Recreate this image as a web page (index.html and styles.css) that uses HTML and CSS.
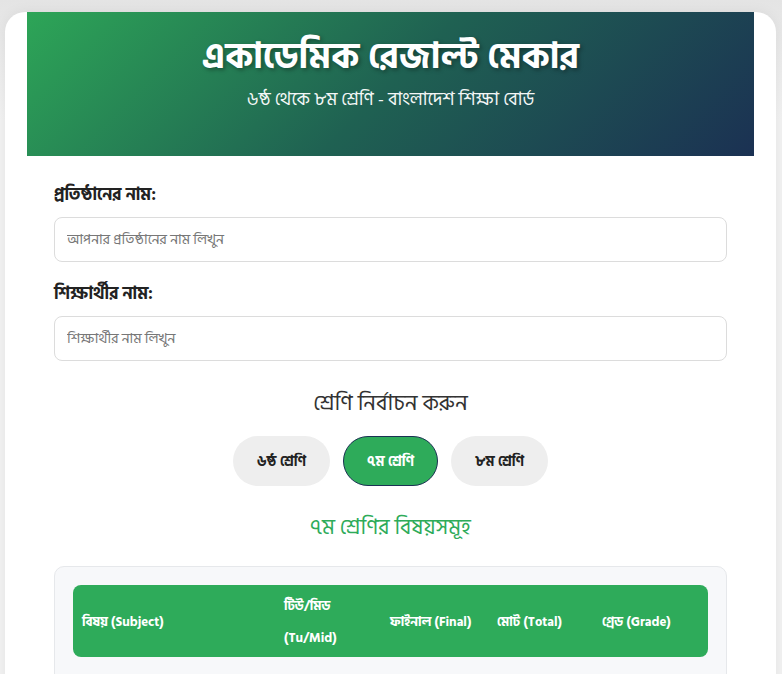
FILE: index.html
```html
<!DOCTYPE html>
<html lang="bn">
<head>
    <meta charset="UTF-8">
    <meta name="viewport" content="width=device-width, initial-scale=1.0">
    <title>একাডেমিক রেজাল্ট মেকার</title>
    <link rel="stylesheet" href="styles.css">
</head>
<body>
    <div class="card">
        <div class="header">
            <h1>একাডেমিক রেজাল্ট মেকার</h1>
            <p>৬ষ্ঠ থেকে ৮ম শ্রেণি - বাংলাদেশ শিক্ষা বোর্ড</p>
        </div>

        <div class="form">
            <div class="field">
                <label for="school">প্রতিষ্ঠানের নাম:</label>
                <input type="text" id="school" placeholder="আপনার প্রতিষ্ঠানের নাম লিখুন">
            </div>
            <div class="field">
                <label for="student">শিক্ষার্থীর নাম:</label>
                <input type="text" id="student" placeholder="শিক্ষার্থীর নাম লিখুন">
            </div>

            <h2 class="class-title">শ্রেণি নির্বাচন করুন</h2>
            <div class="class-buttons">
                <button class="class-btn">৬ষ্ঠ শ্রেণি</button>
                <button class="class-btn active">৭ম শ্রেণি</button>
                <button class="class-btn">৮ম শ্রেণি</button>
            </div>

            <h3 class="subject-title">৭ম শ্রেণির বিষয়সমূহ</h3>

            <div class="subject-panel">
                <table class="subject-table">
                    <thead>
                        <tr>
                            <th class="col-subject">বিষয় (Subject)</th>
                            <th class="col-mid">টিউ/মিড (Tu/Mid)</th>
                            <th class="col-final">ফাইনাল (Final)</th>
                            <th class="col-total">মোট (Total)</th>
                            <th class="col-grade">গ্রেড (Grade)</th>
                        </tr>
                    </thead>
                </table>
            </div>
        </div>
    </div>
</body>
</html>
```

FILE: styles.css
```css
html, body {
    margin: 0;
    padding: 0;
}

body {
    padding: 12px 6px 0 5px;
    min-height: 100vh;
    box-sizing: border-box;
    background: linear-gradient(to bottom, #e4e4e4, #f2f2f2 120px);
    font-family: "Hind Siliguri", "Noto Sans", "Liberation Sans", sans-serif;
    color: #333;
}

.card {
    background: #fff;
    border-radius: 20px 20px 0 0;
    padding: 0 22px 40px;
    min-height: 700px;
    box-shadow: 0 0 14px rgba(0, 0, 0, 0.06);
}

.header {
    background: linear-gradient(135deg, #2da557 0%, #1f6152 50%, #1b3153 100%);
    color: #fff;
    text-align: center;
    padding: 18px 20px 43px;
}

.header h1 {
    margin: 0;
    font-size: 36px;
    font-weight: 700;
    line-height: 1.5;
    text-shadow: 2px 2px 4px rgba(0, 0, 0, 0.35);
}

.header p {
    margin: 2px 0 0;
    font-size: 18px;
    line-height: 1.5;
    opacity: 0.95;
}

.form {
    padding: 25px 27px 0;
}

.field {
    margin-bottom: 18px;
}

.field label {
    display: block;
    font-size: 17px;
    font-weight: 700;
    color: #222;
    margin-bottom: 8px;
}

.field input {
    display: block;
    width: 100%;
    box-sizing: border-box;
    height: 45px;
    padding: 0 12px;
    border: 1px solid #dcdcdc;
    border-radius: 8px;
    font-family: inherit;
    font-size: 14px;
    color: #333;
}

.field input::placeholder {
    color: #777;
}

.class-title {
    text-align: center;
    font-size: 22px;
    font-weight: 400;
    color: #333;
    margin: 24px 0 15px;
}

.class-buttons {
    display: flex;
    justify-content: center;
    gap: 13px;
}

.class-btn {
    width: 97px;
    height: 50px;
    border: 1px solid transparent;
    border-radius: 25px;
    background: #eeeeee;
    color: #222;
    font-family: inherit;
    font-size: 14px;
    font-weight: 700;
    cursor: pointer;
}

.class-btn.active {
    background: #2eab5a;
    border-color: #1b3153;
    color: #fff;
    width: 95px;
}

.subject-title {
    text-align: center;
    font-size: 21.5px;
    font-weight: 400;
    color: #2eab5a;
    margin: 24px 0 21px;
}

.subject-panel {
    background: #f7f8fa;
    border: 1px solid #e6e8eb;
    border-radius: 10px;
    padding: 18px 18px 40px;
}

.subject-table {
    width: 100%;
    border-collapse: separate;
    border-spacing: 0;
}

.subject-table th {
    background: #2eab5a;
    color: #fff;
    font-size: 13px;
    font-weight: 700;
    text-align: left;
    line-height: 32px;
    padding: 5px 9px 3px;
}

.subject-table th:first-child {
    border-radius: 8px 0 0 8px;
}

.subject-table th:last-child {
    border-radius: 0 8px 8px 0;
}

.col-subject { width: 184px; }
.col-mid { width: 88px; }
.col-final { width: 89px; }
.col-total { width: 87px; }
```
